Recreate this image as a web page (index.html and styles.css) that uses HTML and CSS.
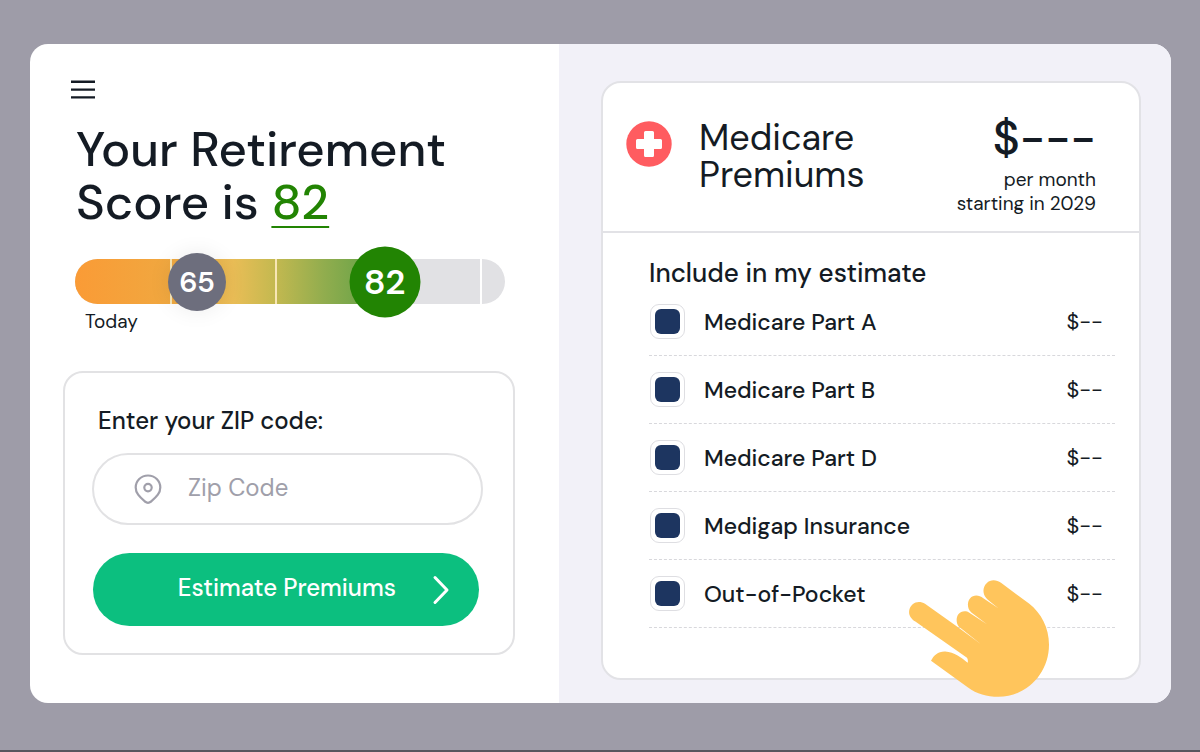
FILE: index.html
```html
<!DOCTYPE html>
<html lang="en">
<head>
<meta charset="utf-8">
<meta name="viewport" content="width=device-width, initial-scale=1">
<title>Your Retirement Score</title>
<link rel="stylesheet" href="styles.css">
</head>
<body>
<main class="app">
  <section class="score">
    <button class="menu" type="button" aria-label="Menu">
      <svg width="24" height="20" viewBox="0 0 24 20" fill="none" stroke="#141b24" stroke-width="2.4"><path d="M0 1.8h24M0 9.600h24M0 17.400h24"/></svg>
    </button>
    <h1 class="title">Your Retirement<br>Score is <a class="value" href="#score">82</a></h1>
    <div class="meter" id="score">
      <div class="track">
        <div class="fill" style="width: 72%"></div>
        <span class="tick" style="left: 22%"></span>
        <span class="tick" style="left: 46.4%"></span>
        <span class="tick tick-light" style="left: 94.3%"></span>
      </div>
      <span class="marker marker-today" style="left: 28.4%">65</span>
      <span class="marker marker-score" style="left: 72%">82</span>
    </div>
    <p class="today">Today</p>
    <form class="zip">
      <label class="zip-label" for="zip">Enter your ZIP code:</label>
      <div class="field">
        <svg class="pin" width="28" height="30" viewBox="0 0 28 30" fill="none" stroke="#a09faa" stroke-width="2.2" stroke-linejoin="round"><path d="M14 1.5C7 1.5 1.7 6.8 1.7 13.4C1.7 19 5.2 22.6 10.8 27.4Q14 30.2 17.2 27.4C22.8 22.6 26.3 19 26.3 13.4C26.3 6.8 21 1.5 14 1.5Z"/><circle cx="14" cy="13.6" r="3.7"/></svg>
        <input class="zip-input" id="zip" type="text" placeholder="Zip Code">
      </div>
      <button class="submit" type="button">
        <span class="submit-text">Estimate Premiums</span>
        <svg class="chevron" width="18" height="30" viewBox="0 0 18 30" fill="none" stroke="#fff" stroke-width="3" stroke-linecap="round" stroke-linejoin="round"><path d="M3 2.500l12 12.500L3 27.500"/></svg>
      </button>
    </form>
  </section>
  <section class="premiums">
    <div class="card">
      <header class="card-head">
        <svg class="cross" width="46" height="46" viewBox="0 0 46 46"><circle cx="23" cy="23" r="22.7" fill="#ff5c60"/><path d="M19.500 10h7a1.500 1.500 0 0 1 1.500 1.500V18h6.500a1.500 1.500 0 0 1 1.500 1.500v7a1.500 1.500 0 0 1-1.500 1.500H28v6.500a1.500 1.500 0 0 1-1.500 1.500h-7a1.500 1.500 0 0 1-1.500-1.500V28h-6.500a1.500 1.500 0 0 1-1.500-1.500v-7a1.500 1.500 0 0 1 1.500-1.500H18v-6.500a1.500 1.500 0 0 1 1.500-1.500Z" fill="#fff"/></svg>
        <h2 class="card-title">Medicare<br>Premiums</h2>
        <div class="total">
          <strong class="amount">$---</strong>
          <span>per month</span>
          <span>starting in 2029</span>
        </div>
      </header>
      <fieldset class="options">
        <legend class="legend">Include in my estimate</legend>
        <label class="option"><input class="check" type="checkbox" checked><span>Medicare Part A</span><span class="price">$--</span></label>
        <label class="option"><input class="check" type="checkbox" checked><span>Medicare Part B</span><span class="price">$--</span></label>
        <label class="option"><input class="check" type="checkbox" checked><span>Medicare Part D</span><span class="price">$--</span></label>
        <label class="option"><input class="check" type="checkbox" checked><span>Medigap Insurance</span><span class="price">$--</span></label>
        <label class="option"><input class="check" type="checkbox" checked><span>Out-of-Pocket</span><span class="price">$--</span></label>
      </fieldset>
    </div>
    <svg class="hand" width="140" height="117" viewBox="57 272 420 350" aria-hidden="true"><path fill="#ffc55c" d="M105 343C94 336 79 335 68 344C56 354 54 372 62 383C66 389 70 392 76 396L231 505Q235 511 233 520C216 505 192 487 166 486C145 485 131 497 123 514L234 594C260 613 291 622 325 622C410 622 477 552 477 466C477 415 454 371 417 342L333 280C320 271 302 269 290 281C278 292 277 311 288 325Q291 329 297 334L325 356L280 326C267 316 250 315 240 327C231 338 231 357 244 369L291 404L238 370C227 362 213 365 205 374C198 384 198 400 206 411L273 464L201 411Z"/></svg>
  </section>
</main>
</body>
</html>
```

FILE: styles.css
```css
* {
  box-sizing: border-box;
}

body {
  margin: 0;
  min-height: 100vh;
  padding: 44px 29px 47px 30px;
  display: flex;
  background: #9e9ca8;
  border-bottom: 2px solid #57565f;
  font-family: "DM Sans", Inter, "Liberation Sans", sans-serif;
  color: #141b24;
}

h1, h2, p, fieldset {
  margin: 0;
  padding: 0;
  border: 0;
  font-weight: 400;
}

button, input {
  font: inherit;
  color: inherit;
}

.app {
  flex: 1;
  display: grid;
  grid-template-columns: minmax(0, 529fr) minmax(0, 612fr);
  border-radius: 18px;
  overflow: hidden;
  background: #fff;
}

.score {
  padding: 36px 44px 44px 33px;
}

.menu {
  display: block;
  margin-left: 8px;
  padding: 0;
  border: 0;
  background: none;
}

.menu svg {
  display: block;
}

.title {
  margin: 23px 0 0 13px;
  font-size: 49px;
  font-weight: 500;
  line-height: 53px;
  white-space: nowrap;
}

.value {
  color: #228403;
  text-decoration: underline;
  text-decoration-thickness: 2px;
  text-underline-offset: 7px;
}

.meter {
  position: relative;
  margin: 30px 10px 0 12px;
}

.track {
  position: relative;
  height: 45px;
  border-radius: 23px;
  overflow: hidden;
  background: #e1e1e4;
}

.fill {
  height: 100%;
  background: linear-gradient(90deg, #fa9b36, #f0a840 31%, #eabd56 51%, #c5b950 64%, #92ad4e 80%, #5ca046);
}

.tick {
  position: absolute;
  top: 0;
  width: 2px;
  height: 100%;
  background: #f8e6b4;
}

.tick-light {
  background: #fff;
}

.marker {
  position: absolute;
  top: 50%;
  display: flex;
  align-items: center;
  justify-content: center;
  border-radius: 50%;
  color: #fff;
  font-weight: 600;
  transform: translate(-50%, -50%);
}

.marker-today {
  width: 58px;
  height: 58px;
  background: #6d6e7d;
  box-shadow: 0 0 22px rgba(0, 0, 0, 0.08);
  font-size: 29px;
}

.marker-score {
  width: 71px;
  height: 71px;
  background: #228403;
  font-size: 35px;
}

.today {
  margin: 6px 0 0 22px;
  font-size: 19px;
  line-height: 24px;
}

.zip {
  margin-top: 37px;
  padding: 32px 30px 27px 27px;
  border: 2px solid #e2e2e4;
  border-radius: 20px;
}

.zip-label {
  display: block;
  margin-left: 6px;
  font-size: 24px;
  font-weight: 500;
  line-height: 32px;
}

.field {
  display: flex;
  align-items: center;
  gap: 26px;
  height: 72px;
  margin-top: 16px;
  padding: 0 40px;
  border: 2px solid #e2e2e4;
  border-radius: 36px;
}

.pin {
  flex: none;
}

.zip-input {
  flex: 1;
  min-width: 0;
  height: 60px;
  padding: 0 0 4px;
  border: 0;
  outline: 0;
  background: none;
  font-size: 24px;
}

.zip-input::placeholder {
  color: #a09faa;
  opacity: 1;
}

.submit {
  display: flex;
  align-items: center;
  justify-content: flex-end;
  gap: 36px;
  width: calc(100% - 5px);
  height: 73px;
  margin: 28px 2px 0 1px;
  padding: 0 29px;
  border: 0;
  border-radius: 37px;
  background: #0cbf7f;
  color: #fff;
  font-size: 24px;
  font-weight: 500;
}

.submit-text {
  padding-bottom: 5px;
}

.premiums {
  position: relative;
  display: flex;
  padding: 37px 30px 23px 42px;
  background: #f2f1f8;
}

.card {
  flex: 1;
  border: 2px solid #e2e2e6;
  border-radius: 20px;
  background: #fff;
}

.card-head {
  display: flex;
  align-items: flex-start;
  padding: 36px 43px 15px 23px;
  border-bottom: 2px solid #e2e2e6;
}

.cross {
  margin-top: 2px;
}

.card-title {
  margin-left: 27px;
  font-size: 36px;
  line-height: 37px;
}

.total {
  display: flex;
  flex-direction: column;
  align-items: flex-end;
  margin-left: auto;
  font-size: 19px;
  line-height: 24px;
}

.amount {
  font-size: 46px;
  font-weight: 500;
  line-height: 38px;
  margin-bottom: 11px;
}

.options {
  padding: 26px 24px 40px 46px;
}

.legend {
  float: left;
  width: 100%;
  padding: 0;
  font-size: 26px;
  font-weight: 500;
  line-height: 29px;
}

.option {
  clear: both;
  display: flex;
  align-items: center;
  gap: 19px;
  height: 68px;
  padding: 0 12px 0 1px;
  border-bottom: 1px dashed #d8d8dc;
  font-size: 23px;
  font-weight: 500;
}

.check {
  appearance: none;
  display: grid;
  place-items: center;
  flex: none;
  width: 35px;
  height: 35px;
  margin: 0;
  border: 1px solid #dedee2;
  border-radius: 9px;
  background: #fff;
}

.check:checked::before {
  content: "";
  width: 25px;
  height: 25px;
  border-radius: 6px;
  background: #1d3560;
}

.price {
  margin-left: auto;
  font-size: 22px;
  font-weight: 400;
}

.hand {
  position: absolute;
  right: 122px;
  bottom: 6px;
}
```
